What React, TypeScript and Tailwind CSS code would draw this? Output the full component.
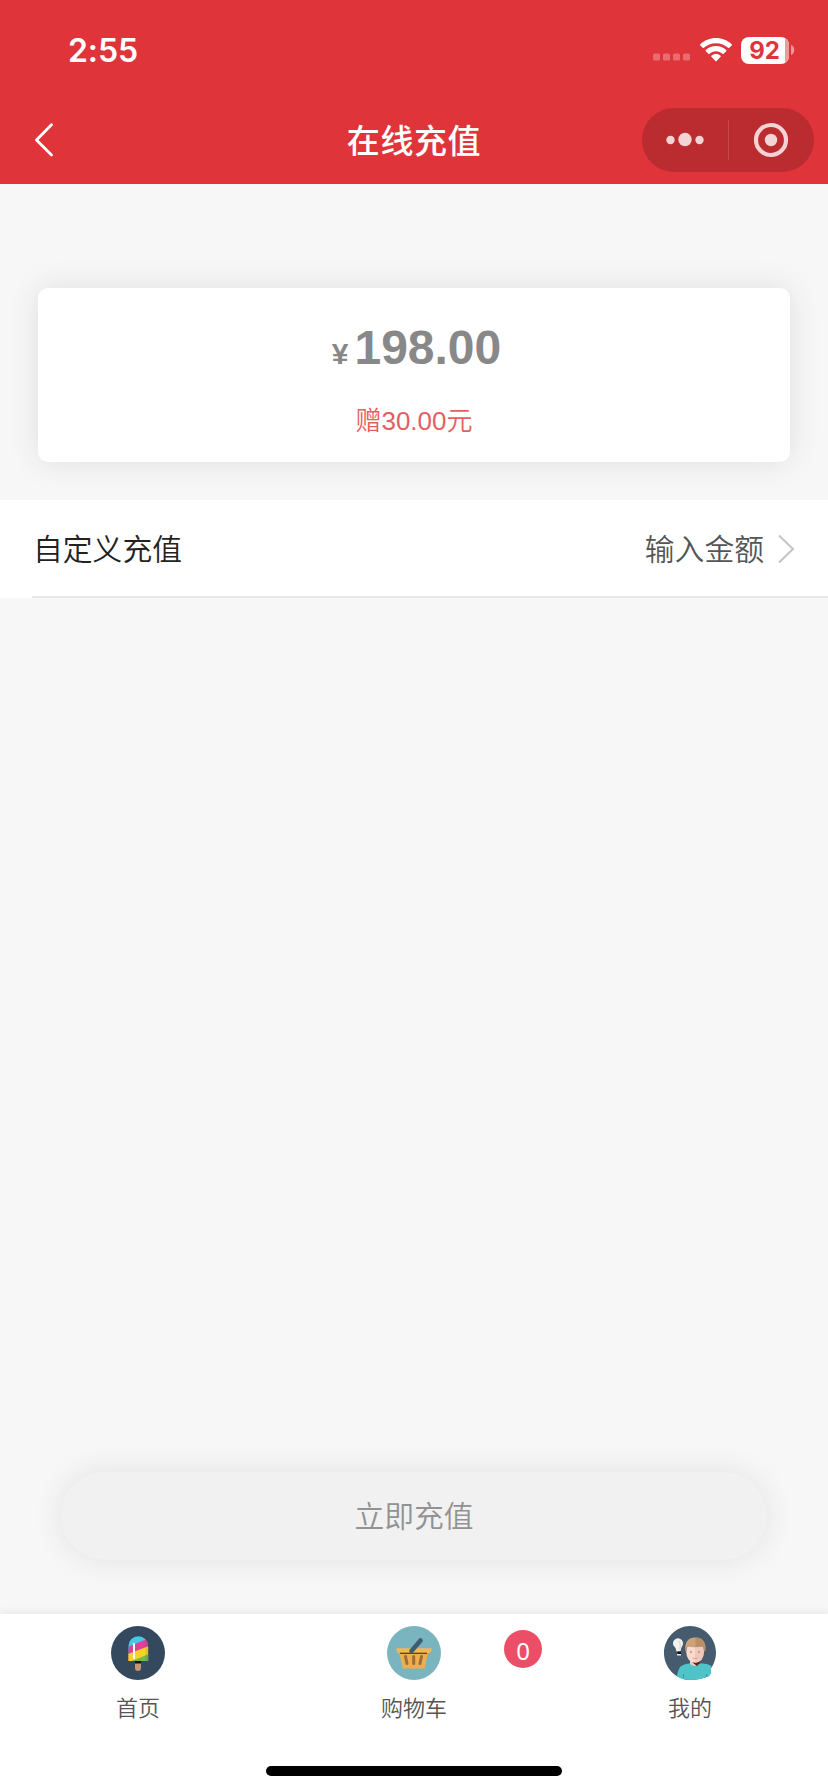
import type { ReactNode } from "react";

function StatusBar() {
  return (
    <div className="flex h-[96px] items-center pt-[4px] pr-[32px] pl-[68px]">
      <span className="mt-[2px] flex-1 font-['Inter',sans-serif] text-[32px] leading-[40px] font-semibold tracking-[-0.1px]">2:55</span>
      <svg width="38" height="8" viewBox="0 0 38 8" className="mt-[14px] mr-[9px]" fill="#fff" fillOpacity="0.28">
        <rect x="0" y="0.5" width="7" height="7" rx="1.5" />
        <rect x="10" y="0.5" width="7" height="7" rx="1.5" />
        <rect x="20" y="0.5" width="7" height="7" rx="1.5" />
        <rect x="30" y="0.5" width="7" height="7" rx="1.5" />
      </svg>
      <svg width="32" height="24" viewBox="0 0 32 24" className="mr-[9px]" fill="#fff">
        <path d="M16 0C9.900 0 4.300 2.400.300 6.200c-.4.400-.4.800 0 1.200l2.400 2.400c.3.400.8.400 1.200 0C7.100 6.900 11.300 5.200 16 5.200s8.900 1.700 12.100 4.600c.4.400.9.400 1.200 0l2.400-2.400c.4-.4.4-.8 0-1.200C27.700 2.400 22.100 0 16 0Z" />
        <path d="M16 8c-3.900 0-7.500 1.500-10.200 4-.4.400-.4.800 0 1.200l2.500 2.500c.4.300.8.400 1.200 0 1.700-1.600 4-2.500 6.500-2.500s4.800.9 6.500 2.500c.4.400.8.300 1.200 0l2.500-2.500c.4-.4.400-.8 0-1.200C23.500 9.500 19.900 8 16 8Z" />
        <path d="M16 16c-1.800 0-3.400.6-4.600 1.700-.4.300-.4.800 0 1.100l4 4.100c.4.400.8.400 1.200 0l4-4.100c.4-.3.400-.8 0-1.100C19.400 16.600 17.800 16 16 16Z" />
      </svg>
      <div className="relative flex h-[27px] w-[48px] items-center justify-center overflow-hidden rounded-[8px] bg-white pr-[1px] font-['Inter',sans-serif] text-[24px] leading-[27px] font-bold text-[#df343a]">
        92
        <span className="absolute inset-y-0 right-0 w-[4px] bg-[#f0999c]" />
      </div>
      <svg width="5" height="10" viewBox="0 0 5 10" className="ml-[2px]">
        <path d="M0 0C4.300 1.200 4.300 8.800 0 10Z" fill="#f0999c" />
      </svg>
    </div>
  );
}

function NavBar() {
  return (
    <div className="grid h-[88px] grid-cols-[1fr_auto_1fr] items-center px-[14px]">
      <svg width="20" height="34" viewBox="0 0 20 34" className="ml-[20px]" fill="none" stroke="#fff" strokeWidth="2.800" strokeLinecap="round" strokeLinejoin="round">
        <path d="M17.500 1.800 2.500 17l15 15" />
      </svg>
      <h1 className="mt-[3px] text-[33px] leading-[48px] font-medium tracking-[0.600px]">在线充值</h1>
      <div className="flex h-[64px] w-[172px] items-center justify-self-end rounded-full bg-[#bb2c30]">
        <svg width="172" height="64" viewBox="0 0 172 64" fill="#f3d3d4">
          <circle cx="28.500" cy="32" r="4.200" />
          <circle cx="43" cy="31.500" r="6.700" />
          <circle cx="57.500" cy="32" r="4.200" />
          <rect x="86" y="12" width="1" height="40" fill="#c8454a" />
          <circle cx="129" cy="32" r="15" fill="none" stroke="#f3d3d4" strokeWidth="4.200" />
          <circle cx="129" cy="32" r="6.200" />
        </svg>
      </div>
    </div>
  );
}

function PopsicleIcon() {
  return (
    <svg width="54" height="54" viewBox="0 0 54 54">
      <defs>
        <clipPath id="popsicle">
          <path d="M17.500 35V20a9.800 9.800 0 0 1 19.600 0v15Z" />
        </clipPath>
      </defs>
      <circle cx="27" cy="27" r="27" fill="#34495e" />
      <path d="M24 35h6v7a3 3 0 0 1-6 0Z" fill="#c89572" />
      <rect x="24" y="35" width="6" height="2.500" fill="#17120f" />
      <g clipPath="url(#popsicle)">
        <rect x="17" y="9" width="21" height="27" fill="#46c9e8" />
        <path d="M17 21 38 12v26H17Z" fill="#dd4298" />
        <path d="M17 28 38 20v18H17Z" fill="#f6d327" />
        <path d="M17 36.500 38 28v9H17Z" fill="#75ba51" />
        <path d="M34.500 9H38v27h-3.500Z" fill="#000" fillOpacity="0.08" />
      </g>
      <rect x="22" y="17" width="2" height="16" rx="0.800" fill="#fff" />
    </svg>
  );
}

function BasketIcon() {
  return (
    <svg width="54" height="54" viewBox="0 0 54 54">
      <circle cx="27" cy="27" r="27" fill="#7ab4be" />
      <path d="M12 26h29l-3 15.500q-.2.900-1.200.9H16.800q-1 0-1.200-.9Z" fill="#eeae4e" />
      <path d="M10 22.200h34q1 0 .8 1L43.500 27h-33L9.200 23.200q-.2-1 .8-1Z" fill="#f3b555" />
      <rect x="13" y="26.700" width="27" height="1.200" fill="#4b3b27" />
      <g stroke="#9b6e35" strokeWidth="3" strokeLinecap="round">
        <path d="m18.500 30.500 1.500 7M26.700 30.500v7M34.500 30.500l-1.500 7" />
      </g>
      <path d="M24.500 25 33.500 14.500" stroke="#3f5c75" strokeWidth="4.500" strokeLinecap="round" />
    </svg>
  );
}

function ProfileIcon() {
  return (
    <svg width="54" height="54" viewBox="0 0 54 54">
      <defs>
        <clipPath id="portrait">
          <path d="M27 0C41 0 53 12 53 26.500q0 8-5 16V47l-2 3q-9 4-19 4C13 54 1 41.500 1 27S13 0 27 0Z" />
        </clipPath>
      </defs>
      <g clipPath="url(#portrait)">
        <rect width="54" height="54" fill="#465b6d" />
        <path d="M13 54q2-10 4-13 3-3 9-3.500h14q5 0 8.500 2.500V54Z" fill="#4fc4c8" />
        <path d="M20.500 48v4M43.500 48v4" stroke="#359ca5" strokeWidth="1" />
        <path d="M27 33h9v5q-4 4-9 0Z" fill="#f2cabd" />
        <path d="M29.500 36.500 37 33.500V37l-3 3Z" fill="#54231f" />
        <ellipse cx="32" cy="26" rx="8.800" ry="10.800" fill="#f8d9cd" />
        <path d="M32 16q8.800 0 8.800 10T32 36.800Z" fill="#efc8bb" />
        <path d="M22.500 26q-2-14 9.500-14.500Q44.500 12 42 26l-2-5.500q-8 1.500-16 0Z" fill="#cba27a" />
        <path d="M32.500 11.500Q44.500 12 42 26l-2-5.500-7.500.6Z" fill="#b98f68" />
        <circle cx="28" cy="26" r="0.900" fill="#b98079" />
        <circle cx="36" cy="26" r="0.900" fill="#b98079" />
        <path d="M29.500 32q2.500 1.500 5 0" stroke="#d9928a" strokeWidth="0.800" fill="none" />
        <path d="M10.500 19.500a5 5 0 1 1 9 0q-1.800 2.800-2 6h-4q-.5-4-3-6Z" fill="#f4f2ee" />
        <path d="M15.500 15q3 3 1 8.500" stroke="#dcd8d2" strokeWidth="1.200" fill="none" />
        <path d="M14.500 25.500H18v2.500h-3.500Z" fill="#111" />
        <path d="M14 28h4v1.500h-4Z" fill="#e8e8e8" />
      </g>
    </svg>
  );
}

function Tab({ label, icon, badge }: { label: string; icon: ReactNode; badge?: number }) {
  return (
    <button type="button" className="relative flex flex-1 flex-col items-center pt-[12px]">
      {icon}
      <span className="mt-[13px] text-[22px] leading-[32px] font-[350] text-[#555]">{label}</span>
      {badge !== undefined && (
        <span className="absolute top-[16px] left-[228px] flex size-[38px] items-center justify-center rounded-full bg-[#eb4f67] pt-[3px] font-['Noto_Sans',sans-serif] text-[24px] leading-[35px] text-white">
          {badge}
        </span>
      )}
    </button>
  );
}

export default function App() {
  return (
    <div className="flex h-[1792px] w-[828px] flex-col overflow-hidden bg-[#f7f7f7] font-['Liberation_Sans','Noto_Sans_CJK_SC',sans-serif]">
      <header className="h-[184px] shrink-0 bg-[#df343a] text-white">
        <StatusBar />
        <NavBar />
      </header>

      <main className="flex flex-1 flex-col pt-[104px]">
        <section className="mx-[38px] flex h-[174px] flex-col items-center rounded-[10px] bg-white shadow-[0_0_32px_rgba(0,0,0,0.10)]">
          <div className="mt-[32px] ml-[5px] flex items-baseline font-bold text-[#888]">
            <span className="mr-[6px] text-[30px] leading-[56px]">¥</span>
            <span className="text-[48px] leading-[56px]">198.00</span>
          </div>
          <p className="mt-[21px] text-[26px] leading-[36px] font-[350] text-[#e45f63]">赠30.00元</p>
        </section>

        <section className="relative mt-[38px] flex h-[98px] items-center bg-white pr-[33px] pl-[33px]">
          <span className="mt-[2px] flex-1 text-[29.800px] leading-[44px] font-[350] text-[#222]">自定义充值</span>
          <span className="mt-[2px] text-[29.800px] leading-[44px] font-[350] text-[#555]">输入金额</span>
          <svg width="17" height="30" viewBox="0 0 17 30" className="ml-[14px]" fill="none" stroke="#c4c4c4" strokeWidth="2">
            <path d="m1 1.500 14 13.500L1 28.500" />
          </svg>
          <span className="absolute right-0 bottom-0 left-[32px] h-[2px] bg-[#e8e8e8]" />
        </section>

        <button
          type="button"
          className="mx-[61px] mt-auto mb-[54px] h-[88px] rounded-full bg-[#f1f1f1] pt-[2px] text-[29.800px] leading-[44px] font-[350] text-[#929292] shadow-[0_0_32px_rgba(0,0,0,0.09)]"
        >
          立即充值
        </button>
      </main>

      <footer className="flex h-[178px] shrink-0 flex-col bg-white shadow-[0_0_10px_rgba(0,0,0,0.09)]">
        <nav className="flex h-[152px]">
          <Tab label="首页" icon={<PopsicleIcon />} />
          <Tab label="购物车" icon={<BasketIcon />} badge={0} />
          <Tab label="我的" icon={<ProfileIcon />} />
        </nav>
        <div className="mx-auto h-[10px] w-[296px] rounded-full bg-black" />
      </footer>
    </div>
  );
}
